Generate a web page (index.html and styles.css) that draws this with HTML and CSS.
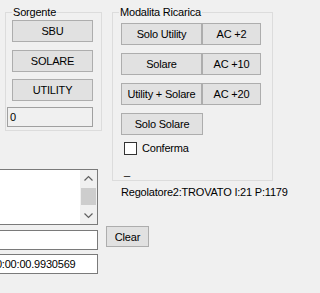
FILE: index.html
```html
<!DOCTYPE html>
<html>
<head>
<meta charset="utf-8">
<link rel="stylesheet" href="styles.css">
</head>
<body>
<div class="page">
  <div class="col-left">
    <fieldset class="group sorgente">
      <legend>Sorgente</legend>
      <div class="stack">
        <button class="btn src sbu">SBU</button>
        <button class="btn src solare">SOLARE</button>
        <button class="btn src utility">UTILITY</button>
        <div class="tb ro">0</div>
      </div>
    </fieldset>
    <div class="log">
      <div class="log-text"></div>
      <div class="vscroll">
        <div class="arrow">
          <svg width="17" height="17" viewBox="0 0 17 17"><polyline points="4.5,10.5 8.5,6.5 12.5,10.5" fill="none" stroke="#606060" stroke-width="1.2"/></svg>
        </div>
        <div class="track"><div class="thumb"></div></div>
        <div class="arrow">
          <svg width="17" height="17" viewBox="0 0 17 17"><polyline points="4.5,6.5 8.5,10.5 12.5,6.5" fill="none" stroke="#606060" stroke-width="1.2"/></svg>
        </div>
      </div>
    </div>
    <div class="tb wide first"></div>
    <div class="tb wide time">00:00:00.9930569</div>
  </div>
  <div class="col-right">
    <fieldset class="group modalita">
      <legend>Modalita Ricarica</legend>
      <div class="stack">
        <div class="row"><button class="btn mode">Solo Utility</button><button class="btn ac">AC +2</button></div>
        <div class="row"><button class="btn mode">Solare</button><button class="btn ac">AC +10</button></div>
        <div class="row"><button class="btn mode">Utility + Solare</button><button class="btn ac">AC +20</button></div>
        <div class="row"><button class="btn mode solo">Solo Solare</button></div>
        <label class="check"><span class="box"></span><span>Conferma</span></label>
        <div class="dash">_</div>
      </div>
    </fieldset>
    <div class="status">Regolatore2:TROVATO I:21 P:1179</div>
    <button class="btn clear">Clear</button>
  </div>
</div>
</body>
</html>
```

FILE: styles.css
```css
html, body {
  margin: 0;
  padding: 0;
}
body {
  background: #f0f0f0;
  font-family: "Liberation Sans", Arial, sans-serif;
  font-size: 11px;
  letter-spacing: -0.2px;
  color: #000;
  width: 320px;
  height: 293px;
  overflow: hidden;
}
.page {
  display: flex;
  align-items: flex-start;
}
.col-left {
  width: 106px;
  flex: none;
  display: flex;
  flex-direction: column;
}
.col-right {
  flex: 1;
  display: flex;
  flex-direction: column;
  align-items: flex-start;
}
.group {
  margin: 6px 0 0 0;
  padding: 0;
  border: 1px solid #dcdcdc;
  box-sizing: border-box;
  min-width: 0;
}
.group legend {
  padding: 0 1px;
  margin-left: 6px;
  line-height: 12px;
  height: 12px;
}
.stack {
  display: flex;
  flex-direction: column;
  align-items: flex-start;
}
.btn {
  font: inherit;
  letter-spacing: inherit;
  color: #000;
  background: #e1e1e1;
  border: 1px solid #adadad;
  padding: 0;
  margin: 0;
  box-sizing: border-box;
  text-align: center;
  white-space: nowrap;
}
/* Sorgente */
.sorgente {
  margin-left: 5px;
  width: 97px;
  height: 125px;
}
.sorgente .stack {
  padding: 2px 0 0 6px;
}
.src {
  width: 81px;
  height: 22px;
}
.solare { margin-top: 8px; }
.utility { margin-top: 7px; }
.tb {
  box-sizing: border-box;
  border: 1px solid #7a7a7a;
  background: #fff;
  height: 20px;
  line-height: 18px;
  white-space: nowrap;
  overflow: hidden;
}
.tb.ro {
  margin: 6px 0 0 -5px;
  width: 86px;
  background: #f0f0f0;
  border-color: #a0a0a0;
  padding-left: 2px;
}
/* log */
.log {
  margin: 38px 0 0 -40px;
  width: 138px;
  height: 56px;
  box-sizing: border-box;
  border: 1px solid #7a7a7a;
  background: #fff;
  display: flex;
}
.log-text {
  flex: 1;
}
.vscroll {
  width: 17px;
  display: flex;
  flex-direction: column;
  background: #f0f0f0;
}
.arrow {
  height: 17px;
  display: flex;
}
.track {
  flex: 1;
  padding: 1px 1px 0 1px;
}
.thumb {
  height: 17px;
  background: #cdcdcd;
}
.tb.wide {
  margin-left: -40px;
  width: 138px;
}
.tb.first { margin-top: 5px; }
.tb.time {
  margin-top: 4px;
  padding-left: 29px;
}
/* Modalita */
.modalita {
  margin-left: 6px;
  width: 161px;
  height: 175px;
}
.modalita .stack {
  padding: 5px 0 0 8px;
}
.row {
  display: flex;
  height: 22px;
  margin-bottom: 8px;
}
.mode {
  width: 81px;
  height: 22px;
}
.ac {
  width: 59px;
  height: 22px;
}
.mode.solo {
  width: 82px;
}
.check {
  display: flex;
  align-items: center;
  height: 13px;
  margin: -1px 0 0 3px;
  line-height: 13px;
}
.box {
  width: 13px;
  height: 13px;
  box-sizing: border-box;
  border: 1px solid #333;
  background: #fff;
  margin-right: 5px;
}
.dash {
  margin: 10px 0 0 3px;
  line-height: 12px;
}
.status {
  margin: 5px 0 0 15px;
  line-height: 12px;
  white-space: nowrap;
}
.clear {
  margin-top: 28px;
  width: 43px;
  height: 21px;
}
```
